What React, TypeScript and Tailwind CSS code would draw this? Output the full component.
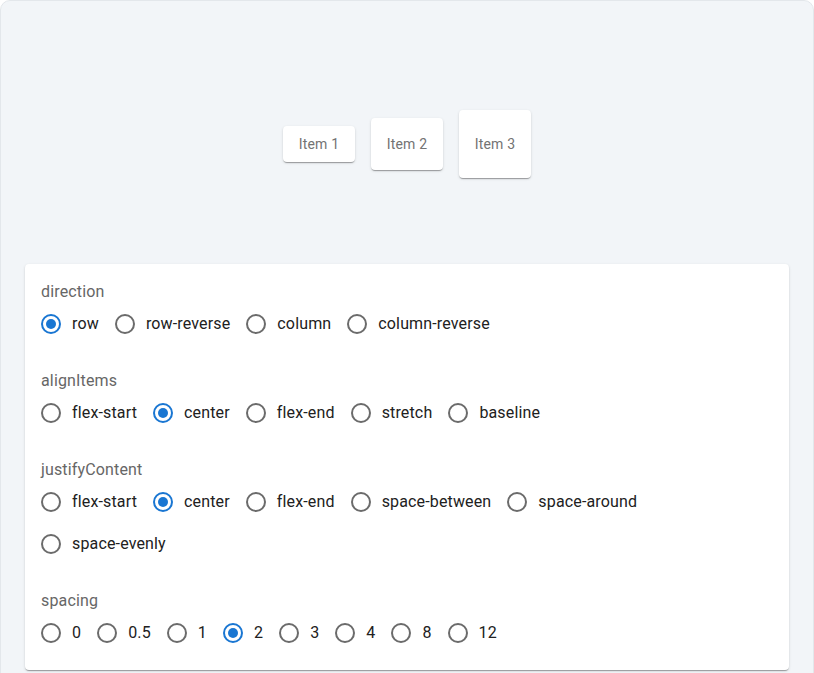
import React from "react";

type Group = { label: string; options: string[]; selected: string };

const groups: Group[] = [
  {
    label: "direction",
    options: ["row", "row-reverse", "column", "column-reverse"],
    selected: "row",
  },
  {
    label: "alignItems",
    options: ["flex-start", "center", "flex-end", "stretch", "baseline"],
    selected: "center",
  },
  {
    label: "justifyContent",
    options: [
      "flex-start",
      "center",
      "flex-end",
      "space-between",
      "space-around",
      "space-evenly",
    ],
    selected: "center",
  },
  {
    label: "spacing",
    options: ["0", "0.5", "1", "2", "3", "4", "8", "12"],
    selected: "2",
  },
];

function Radio({ checked }: { checked: boolean }) {
  return (
    <span
      className={`flex h-5 w-5 shrink-0 items-center justify-center rounded-full border-2 ${
        checked ? "border-[#1976d2]" : "border-[#6b6b6b]"
      }`}
    >
      {checked && <span className="h-2.5 w-2.5 rounded-full bg-[#1976d2]" />}
    </span>
  );
}

export default function App() {
  const items = [
    { name: "Item 1", py: "py-2" },
    { name: "Item 2", py: "py-4" },
    { name: "Item 3", py: "py-6" },
  ];

  return (
    <div className="h-[673px] w-[814px] overflow-hidden bg-white font-['Roboto',sans-serif]">
      <div className="h-[720px] rounded-t-[10px] border border-[#e3e7eb] bg-[#f2f5f8] px-6 pt-[23px]">
        {/* Preview */}
        <div className="flex h-[240px] items-center justify-center gap-4">
          {items.map((it) => (
            <div
              key={it.name}
              className={`w-[72px] rounded bg-white text-center text-sm leading-5 tracking-[0.15px] text-[#737373] shadow-[0_2px_1px_-1px_rgba(0,0,0,0.2),0_1px_1px_0_rgba(0,0,0,0.14),0_1px_3px_0_rgba(0,0,0,0.12)] ${it.py}`}
            >
              {it.name}
            </div>
          ))}
        </div>

        {/* Controls */}
        <div className="flex flex-col gap-6 rounded bg-white p-4 shadow-[0_2px_1px_-1px_rgba(0,0,0,0.2),0_1px_1px_0_rgba(0,0,0,0.14),0_1px_3px_0_rgba(0,0,0,0.12)]">
          {groups.map((g) => (
            <div key={g.label} className="flex flex-col">
              <div className="text-base leading-[23px] tracking-[0.15px] text-[#666666]">
                {g.label}
              </div>
              <div className="flex flex-wrap">
                {g.options.map((o) => (
                  <label
                    key={o}
                    className="mr-4 flex h-[42px] items-center text-base tracking-[0.15px] text-[#212121]"
                  >
                    <Radio checked={o === g.selected} />
                    <span className="ml-[11px]">{o}</span>
                  </label>
                ))}
              </div>
            </div>
          ))}
        </div>
      </div>
    </div>
  );
}
